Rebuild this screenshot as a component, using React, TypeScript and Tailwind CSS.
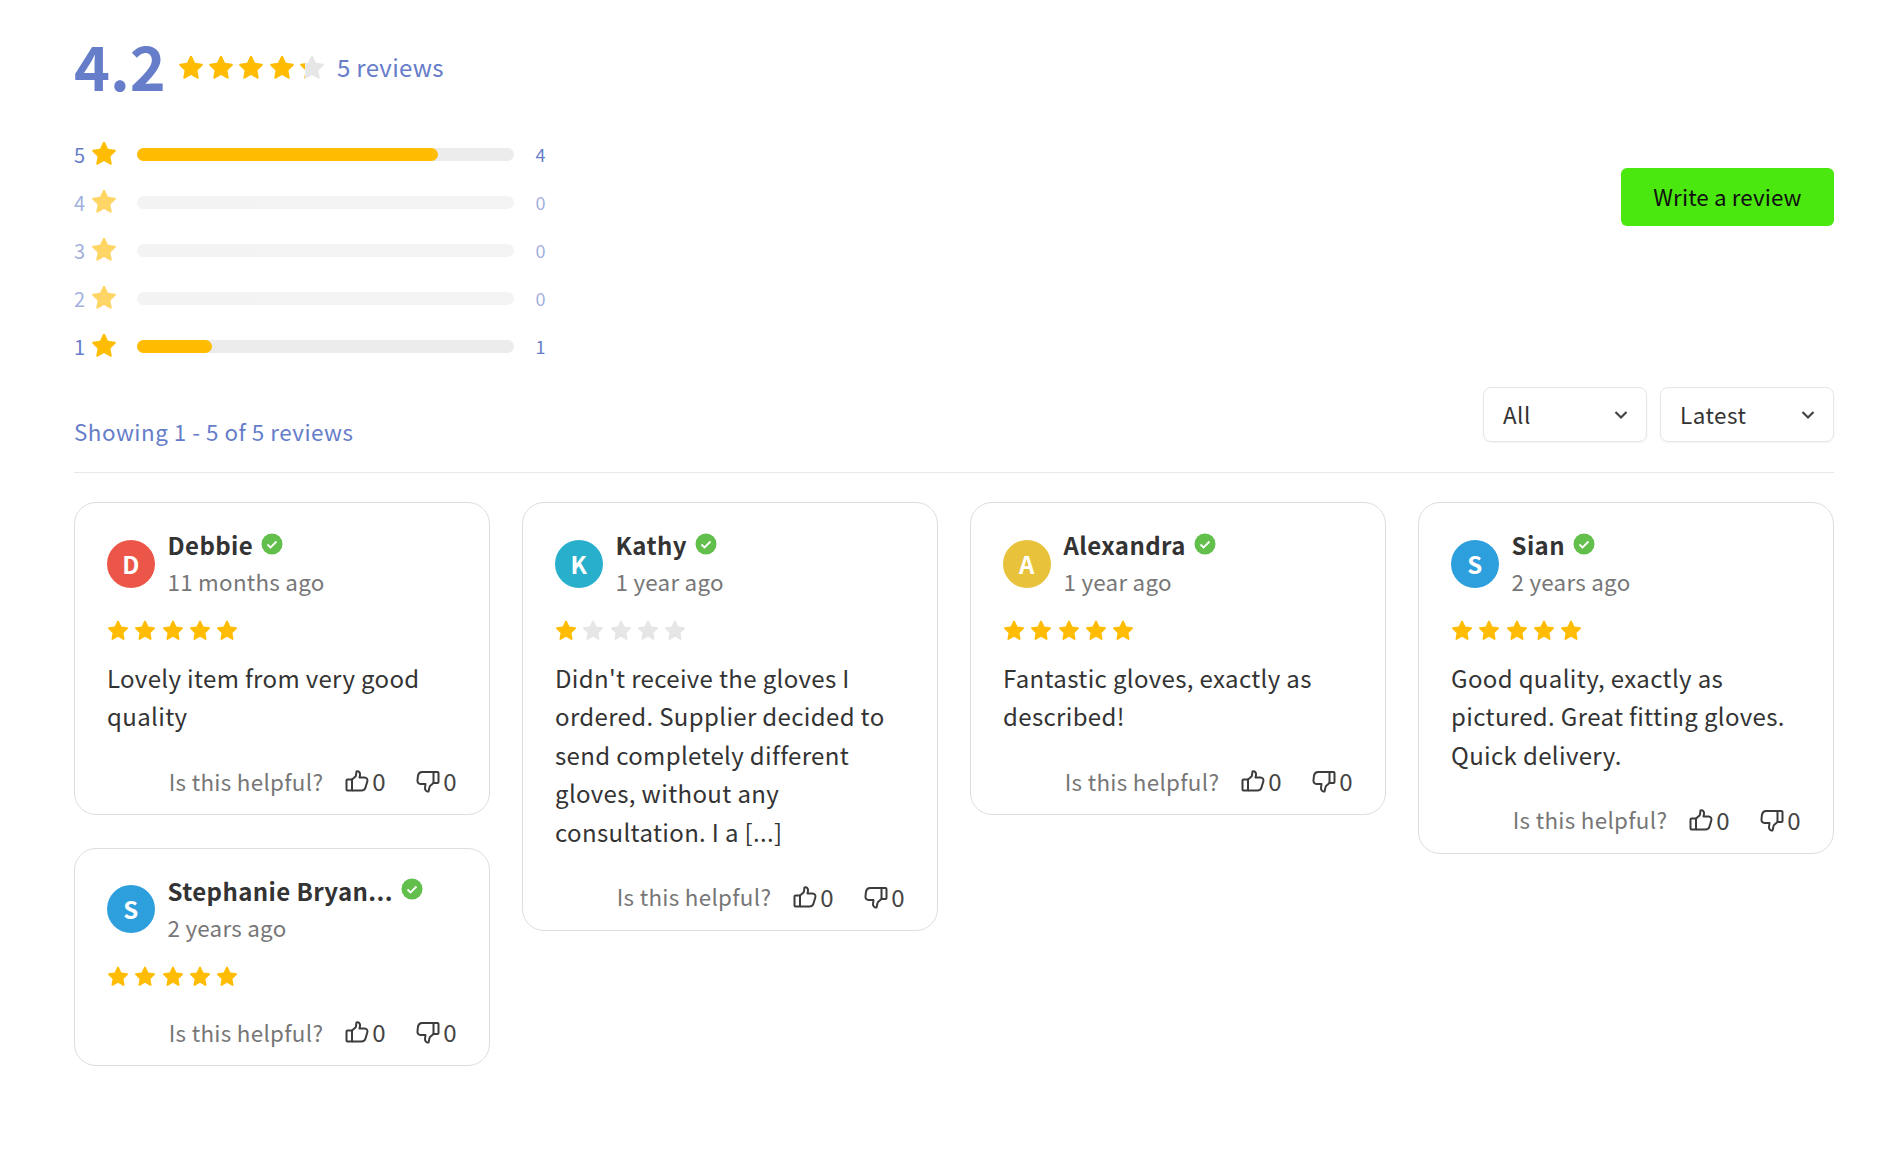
import React from "react";

const STAR = "M12 1.6c.4 0 .7.2.9.6l2.9 6.2 6.7.9c.9.1 1.2 1.2.6 1.8l-4.9 4.7 1.2 6.7c.2.9-.8 1.6-1.6 1.1L12 20.1l-5.8 3.5c-.8.5-1.8-.2-1.6-1.1l1.2-6.7L.9 11.1c-.6-.6-.3-1.7.6-1.8l6.7-.9 2.9-6.2c.2-.4.5-.6.9-.6z";

function Star({ size, fill, className = "" }: { size: number; fill: string; className?: string }) {
  return (
    <svg width={size} height={size} viewBox="0 0 24 25" className={`shrink-0 ${className}`}>
      <path d={STAR} fill={fill} />
    </svg>
  );
}

function HalfStar({ size }: { size: number }) {
  return (
    <svg width={size} height={size} viewBox="0 0 24 25" className="shrink-0">
      <defs>
        <linearGradient id="partial">
          <stop offset="20%" stopColor="#ffbc00" />
          <stop offset="20%" stopColor="#e6e6e6" />
        </linearGradient>
      </defs>
      <path d={STAR} fill="url(#partial)" />
    </svg>
  );
}

function Bar({ n, count, pct }: { n: number; count: number; pct: number }) {
  const active = count > 0;
  return (
    <div className={`flex h-[48px] w-[472px] items-center ${active ? "" : "opacity-60"}`}>
      <span className="mt-[1px] w-[17px] text-[20px] leading-none text-[#667dc9]">{n}</span>
      <Star size={26} fill="#ffbc00" className="-mt-[3px] -mr-[1px]" />
      <div className="ml-[21px] h-[13px] w-[377px] rounded-full bg-[#ececec]">
        <div className="h-full rounded-full bg-[#ffbc00]" style={{ width: `${pct}%` }} />
      </div>
      <span className="ml-[22px] text-[18px] leading-none text-[#667dc9]">{count}</span>
    </div>
  );
}

function Select({ label, w }: { label: string; w: string }) {
  return (
    <div className={`flex h-[55px] items-center justify-between rounded-[8px] border border-[#e6e6e6] pl-[19px] pr-[18px] text-[22.400px] text-[#333] shadow-[0_1px_2px_rgba(0,0,0,0.05)] ${w}`}>
      <span>{label}</span>
      <svg width="14" height="10" viewBox="0 0 14 10" fill="none" stroke="#444" strokeWidth="2.200">
        <path d="M1.500 2l5.500 5.500L12.500 2" />
      </svg>
    </div>
  );
}

function ThumbUp() {
  return (
    <svg width="24" height="24" viewBox="0 0 24 24" fill="none" stroke="#3c3c3c" strokeWidth="2" strokeLinejoin="round" className="shrink-0">
      <path d="M7 10.500 H2.500 a1 1 0 0 0 -1 1 V20.500 a1 1 0 0 0 1 1 H7 Z" />
      <path d="M7 10.500 L10.500 7.500 C11.500 6 11 4 11.500 2.500 C13.500 1.500 15.500 3.500 15 6 L14.500 8.500 H19.500 C21.800 8.500 23 10.500 22.300 12.500 L20.500 18.500 C19.900 20.500 18.500 21.500 16.500 21.500 H7" />
    </svg>
  );
}

function ThumbDown() {
  return (
    <svg width="24" height="24" viewBox="0 0 24 24" fill="none" stroke="#3c3c3c" strokeWidth="2" strokeLinejoin="round" className="shrink-0">
      <path d="M17.500 3 H21.500 a1 1 0 0 1 1 1 V13 a1 1 0 0 1 -1 1 H17.500 Z" />
      <path d="M17.500 3 H6 C3.800 3 2.500 4.500 2 6.500 L1.500 11 C1.200 13.500 2.500 15 4.500 15 H9.500 L9 19 C8.800 21 10.500 23 12.500 22.500 C13.200 20.500 13 18.500 14 17 L17.500 14" />
    </svg>
  );
}

type Review = { name: string; time: string; color: string; rating: number; text: string[] };

function Card({ r }: { r: Review }) {
  return (
    <div className="rounded-[22px] border border-[#dedede] bg-white pl-[32px] pr-[32px] pt-[24px] pb-[14px]">
      <div className="flex items-center">
        <div className="flex h-[48px] w-[48px] shrink-0 items-center justify-center rounded-full text-[24px] font-bold text-white" style={{ backgroundColor: r.color }}>
          {r.name[0]}
        </div>
        <div className="ml-[12.500px]">
          <div className="flex h-[36px] items-center text-[24px] font-bold leading-[36px] tracking-[0.4px] text-[#333]">
            <span>{r.name}</span>
            <svg width="22" height="22" viewBox="0 0 22 22" className="ml-[8px] -mt-[3px] shrink-0">
              <circle cx="11" cy="11" r="10.500" fill="#62bf4c" />
              <path d="M6.500 11.500l3 3 6-6" fill="none" stroke="#fff" strokeWidth="1.800" />
            </svg>
          </div>
          <div className="h-[37px] text-[22.400px] font-normal leading-[37px] tracking-[0.25px] text-[#777]">{r.time}</div>
        </div>
      </div>
      <div className="mt-[19px] flex gap-[5.300px]">
        {[0, 1, 2, 3, 4].map((i) => (
          <Star key={i} size={22} fill={i < r.rating ? "#ffbc00" : "#e6e6e6"} />
        ))}
      </div>
      <div className="mt-[18px] text-[24px] leading-[38.400px] tracking-[0.35px] text-[#333]">
        {r.text.map((t) => (
          <div key={t} className="whitespace-nowrap">{t}</div>
        ))}
      </div>
      <div className="mt-[26.500px] flex h-[38px] items-center justify-end">
        <span className="text-[22.400px] tracking-[0.3px] text-[#777]">Is this helpful?</span>
        <div className="ml-[22px] flex items-center">
          <ThumbUp />
          <span className="ml-[3px] text-[24px] text-[#444]">0</span>
        </div>
        <div className="ml-[30px] flex items-center">
          <ThumbDown />
          <span className="ml-[3px] text-[24px] text-[#444]">0</span>
        </div>
      </div>
    </div>
  );
}

const reviews: Record<string, Review> = {
  debbie: { name: "Debbie", time: "11 months ago", color: "#ec5648", rating: 5, text: ["Lovely item from very good", "quality"] },
  steph: { name: "Stephanie Bryan...", time: "2 years ago", color: "#2d9fdd", rating: 5, text: [] },
  kathy: { name: "Kathy", time: "1 year ago", color: "#27afcc", rating: 1, text: ["Didn't receive the gloves I", "ordered. Supplier decided to", "send completely different", "gloves, without any", "consultation. I a [...]"] },
  alex: { name: "Alexandra", time: "1 year ago", color: "#e8c23a", rating: 5, text: ["Fantastic gloves, exactly as", "described!"] },
  sian: { name: "Sian", time: "2 years ago", color: "#2d9fdd", rating: 5, text: ["Good quality, exactly as", "pictured. Great fitting gloves.", "Quick delivery."] },
};

export default function App() {
  return (
    <div className="min-h-[1168px] bg-white pl-[74px] pr-[66px] pt-[31px] tracking-[0.5px] text-[#333] [font-family:'Noto_Sans_CJK_SC','Noto_Sans',sans-serif]">
      <div className="flex items-center">
        <span className="-mt-[3px] mb-[3px] text-[61px] font-bold leading-[74px] tracking-normal text-[#667dc9]">4.2</span>
        <div className="ml-[12px] -mt-[3px] flex gap-[4.300px]">
          {[0, 1, 2, 3].map((i) => (
            <Star key={i} size={26} fill="#ffbc00" />
          ))}
          <HalfStar size={26} />
        </div>
        <span className="ml-[12px] -mt-[3px] text-[24px] tracking-[0.3px] text-[#667dc9]">5 reviews</span>
      </div>

      <div className="mt-[25px] flex items-start justify-between">
        <div>
          <Bar n={5} count={4} pct={80} />
          <Bar n={4} count={0} pct={0} />
          <Bar n={3} count={0} pct={0} />
          <Bar n={2} count={0} pct={0} />
          <Bar n={1} count={1} pct={20} />
        </div>
        <button className="mt-[38px] h-[58px] w-[213px] rounded-[6px] bg-[#4ae80f] text-center text-[22.400px] tracking-[0.1px] text-[#111]">
          Write a review
        </button>
      </div>

      <div className="mt-[17px] flex items-end justify-between border-b border-[#e8e8e8] pb-[17px]">
        <span className="mb-[6px] text-[22.400px] leading-[36px] text-[#667dc9]">Showing 1 - 5 of 5 reviews</span>
        <div className="mb-[13px] flex gap-[13px]">
          <Select label="All" w="w-[164px]" />
          <Select label="Latest" w="w-[174px]" />
        </div>
      </div>

      <div className="mt-[29px] grid grid-cols-4 items-start gap-[32px]">
        <div className="flex flex-col gap-[32.500px]">
          <Card r={reviews.debbie} />
          <Card r={reviews.steph} />
        </div>
        <Card r={reviews.kathy} />
        <Card r={reviews.alex} />
        <Card r={reviews.sian} />
      </div>
    </div>
  );
}
